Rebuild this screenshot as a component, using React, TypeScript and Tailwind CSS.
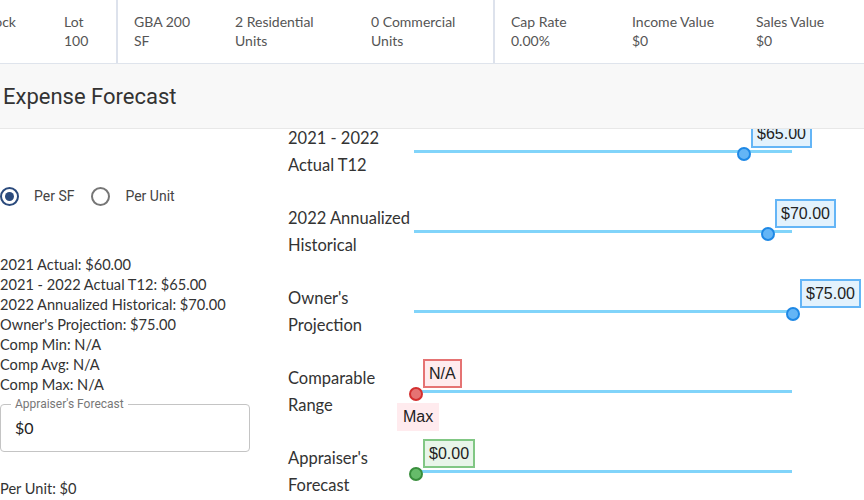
import React from 'react'

type Stat = { label: string; value: string; w: string }

const groups: Stat[][] = [
  [
    { label: 'Block', value: '2', w: 'w-[82px]' },
    { label: 'Lot', value: '100', w: 'w-[52px]' },
  ],
  [
    { label: 'GBA 200', value: 'SF', w: 'w-[101px]' },
    { label: '2 Residential', value: 'Units', w: 'w-[136px]' },
    { label: '0 Commercial', value: 'Units', w: 'w-[122px]' },
  ],
  [
    { label: 'Cap Rate', value: '0.00%', w: 'w-[121px]' },
    { label: 'Income Value', value: '$0', w: 'w-[124px]' },
    { label: 'Sales Value', value: '$0', w: 'w-[100px]' },
  ],
]

const tones = {
  blue: {
    thumb: 'bg-[#64b5f6] border-[#1e88e5]',
    box: 'bg-[#e3f2fd] border-[#64b5f6]',
  },
  red: {
    thumb: 'bg-[#e57373] border-[#d32f2f]',
    box: 'bg-[#ffebee] border-[#e57373]',
  },
  green: {
    thumb: 'bg-[#66bb6a] border-[#388e3c]',
    box: 'bg-[#e8f5e9] border-[#81c784]',
  },
}

type Row = {
  lines: [string, string]
  pos: number
  value: string
  tone: keyof typeof tones
  extra?: string
}

const rows: Row[] = [
  { lines: ['2021 - 2022', 'Actual T12'], pos: 330, value: '$65.00', tone: 'blue' },
  { lines: ['2022 Annualized', 'Historical'], pos: 354, value: '$70.00', tone: 'blue' },
  { lines: ["Owner's", 'Projection'], pos: 379, value: '$75.00', tone: 'blue' },
  { lines: ['Comparable', 'Range'], pos: 2, value: 'N/A', tone: 'red', extra: 'Max' },
  { lines: ["Appraiser's", 'Forecast'], pos: 2, value: '$0.00', tone: 'green' },
]

const summary = [
  '2021 Actual: $60.00',
  '2021 - 2022 Actual T12: $65.00',
  '2022 Annualized Historical: $70.00',
  "Owner's Projection: $75.00",
  'Comp Min: N/A',
  'Comp Avg: N/A',
  'Comp Max: N/A',
]

function SliderRow({ row }: { row: Row }) {
  const t = tones[row.tone]
  return (
    <div className="flex h-[80px]">
      <div className="w-[126px] shrink-0 pt-[2px] text-[16.5px] leading-[27px] text-[#333] whitespace-nowrap">
        <div>{row.lines[0]}</div>
        <div>{row.lines[1]}</div>
      </div>
      <div className="relative w-[378px]">
        <div className="absolute left-0 right-0 top-[27px] h-[3px] bg-[#81d4fa]" />
        <div
          className={`absolute top-[24px] w-[14px] h-[14px] rounded-full border-2 ${t.thumb}`}
          style={{ left: row.pos - 7 }}
        />
        <div
          className={`absolute top-[-4px] border-2 px-[4px] leading-[25px] text-[16px] text-[#222] font-['Liberation_Sans'] whitespace-nowrap ${t.box}`}
          style={{ left: row.pos + 7 }}
        >
          {row.value}
        </div>
        {row.extra && (
          <div
            className="absolute top-[40px] border-2 border-transparent bg-[#ffebee] px-[4px] leading-[24px] text-[16px] text-[#222] font-['Liberation_Sans']"
            style={{ left: row.pos - 19 }}
          >
            {row.extra}
          </div>
        )}
      </div>
    </div>
  )
}

function Radio({ checked, label }: { checked?: boolean; label: string }) {
  return (
    <label className="flex items-center">
      <span
        className={`w-[19px] h-[19px] rounded-full border-2 flex items-center justify-center ${
          checked ? 'border-[#2b4a7c]' : 'border-[#767676]'
        }`}
      >
        {checked && <span className="w-[9px] h-[9px] rounded-full bg-[#2b4a7c]" />}
      </span>
      <span className="ml-[15px] font-['Roboto'] text-[14px] text-[#444]">{label}</span>
    </label>
  )
}

export default function App() {
  return (
    <div className="w-[864px] h-[500px] overflow-hidden bg-white font-['Lato',sans-serif] text-[#333]">
      {/* stats header */}
      <div className="h-[64px] border-b border-[#dfe4ec] overflow-hidden">
        <div className="flex h-full -ml-[18px]">
          {groups.map((g, gi) => (
            <div
              key={gi}
              className={`flex h-full ${gi > 0 ? 'pl-[16px] border-l-2 border-[#dde2ec]' : ''}`}
            >
              {g.map((s) => (
                <div key={s.label} className={`${s.w} pt-[12px] text-[14px] leading-[19px] text-[#555]`}>
                  <div>{s.label}</div>
                  <div>{s.value}</div>
                </div>
              ))}
            </div>
          ))}
        </div>
      </div>

      {/* section title */}
      <div className="h-[65px] bg-[#f8f8f8] border-b border-[#e8e8e8] flex items-center">
        <h2 className="ml-[3px] mt-[1px] font-['Roboto'] text-[22px] text-[#333]">Expense Forecast</h2>
      </div>

      <div className="flex h-[371px] overflow-hidden">
        {/* left */}
        <div className="w-[288px] shrink-0">
          <div className="mt-[57px] flex items-center gap-[17px]">
            <Radio checked label="Per SF" />
            <Radio label="Per Unit" />
          </div>
          <div className="mt-[48px] text-[14.6px] leading-[20px] text-[#333]">
            {summary.map((s) => (
              <div key={s}>{s}</div>
            ))}
          </div>
          <div className="relative mt-[9px] w-[250px] h-[48px] rounded-[4px] border border-[#c4c4c4]">
            <span className="absolute -top-[8px] left-[10px] bg-white px-[4px] font-['Roboto'] text-[12px] leading-[14px] text-[#777]">
              Appraiser's Forecast
            </span>
            <div className="pl-[14px] pt-[12px] text-[16px] leading-[22px] text-[#222]">$0</div>
          </div>
          <div className="mt-[27px] text-[14.6px] leading-[20px]">Per Unit: $0</div>
        </div>

        {/* right */}
        <div className="-mt-[6px]">
          {rows.map((r) => (
            <SliderRow key={r.lines[0]} row={r} />
          ))}
        </div>
      </div>
    </div>
  )
}
